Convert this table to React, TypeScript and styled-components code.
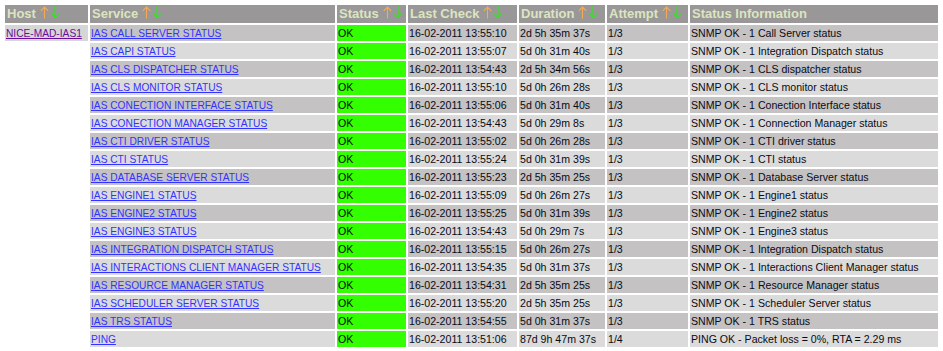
import React from "react";
import styled, { createGlobalStyle } from "styled-components";

interface IService {
  name: string;
  lastCheck: string;
  duration: string;
  attempt: string;
  info: string;
}

const services: IService[] = [
  { name: "IAS CALL SERVER STATUS", lastCheck: "16-02-2011 13:55:10", duration: "2d 5h 35m 37s", attempt: "1/3", info: "SNMP OK - 1 Call Server status" },
  { name: "IAS CAPI STATUS", lastCheck: "16-02-2011 13:55:07", duration: "5d 0h 31m 40s", attempt: "1/3", info: "SNMP OK - 1 Integration Dispatch status" },
  { name: "IAS CLS DISPATCHER STATUS", lastCheck: "16-02-2011 13:54:43", duration: "2d 5h 34m 56s", attempt: "1/3", info: "SNMP OK - 1 CLS dispatcher status" },
  { name: "IAS CLS MONITOR STATUS", lastCheck: "16-02-2011 13:55:10", duration: "5d 0h 26m 28s", attempt: "1/3", info: "SNMP OK - 1 CLS monitor status" },
  { name: "IAS CONECTION INTERFACE STATUS", lastCheck: "16-02-2011 13:55:06", duration: "5d 0h 31m 40s", attempt: "1/3", info: "SNMP OK - 1 Conection Interface status" },
  { name: "IAS CONECTION MANAGER STATUS", lastCheck: "16-02-2011 13:54:43", duration: "5d 0h 29m 8s", attempt: "1/3", info: "SNMP OK - 1 Connection Manager status" },
  { name: "IAS CTI DRIVER STATUS", lastCheck: "16-02-2011 13:55:02", duration: "5d 0h 26m 28s", attempt: "1/3", info: "SNMP OK - 1 CTI driver status" },
  { name: "IAS CTI STATUS", lastCheck: "16-02-2011 13:55:24", duration: "5d 0h 31m 39s", attempt: "1/3", info: "SNMP OK - 1 CTI status" },
  { name: "IAS DATABASE SERVER STATUS", lastCheck: "16-02-2011 13:55:23", duration: "2d 5h 35m 25s", attempt: "1/3", info: "SNMP OK - 1 Database Server status" },
  { name: "IAS ENGINE1 STATUS", lastCheck: "16-02-2011 13:55:09", duration: "5d 0h 26m 27s", attempt: "1/3", info: "SNMP OK - 1 Engine1 status" },
  { name: "IAS ENGINE2 STATUS", lastCheck: "16-02-2011 13:55:25", duration: "5d 0h 31m 39s", attempt: "1/3", info: "SNMP OK - 1 Engine2 status" },
  { name: "IAS ENGINE3 STATUS", lastCheck: "16-02-2011 13:54:43", duration: "5d 0h 29m 7s", attempt: "1/3", info: "SNMP OK - 1 Engine3 status" },
  { name: "IAS INTEGRATION DISPATCH STATUS", lastCheck: "16-02-2011 13:55:15", duration: "5d 0h 26m 27s", attempt: "1/3", info: "SNMP OK - 1 Integration Dispatch status" },
  { name: "IAS INTERACTIONS CLIENT MANAGER STATUS", lastCheck: "16-02-2011 13:54:35", duration: "5d 0h 31m 37s", attempt: "1/3", info: "SNMP OK - 1 Interactions Client Manager status" },
  { name: "IAS RESOURCE MANAGER STATUS", lastCheck: "16-02-2011 13:54:31", duration: "2d 5h 35m 25s", attempt: "1/3", info: "SNMP OK - 1 Resource Manager status" },
  { name: "IAS SCHEDULER SERVER STATUS", lastCheck: "16-02-2011 13:55:20", duration: "2d 5h 35m 25s", attempt: "1/3", info: "SNMP OK - 1 Scheduler Server status" },
  { name: "IAS TRS STATUS", lastCheck: "16-02-2011 13:54:55", duration: "5d 0h 31m 37s", attempt: "1/3", info: "SNMP OK - 1 TRS status" },
  { name: "PING", lastCheck: "16-02-2011 13:51:06", duration: "87d 9h 47m 37s", attempt: "1/4", info: "PING OK - Packet loss = 0%, RTA = 2.29 ms" },
];

const columns = [
  { title: "Host", width: 83, sortable: true },
  { title: "Service", width: 245, sortable: true },
  { title: "Status", width: 69, sortable: true },
  { title: "Last Check", width: 109, sortable: true },
  { title: "Duration", width: 86, sortable: true },
  { title: "Attempt", width: 81, sortable: true },
  { title: "Status Information", width: 248, sortable: false },
];

const SortArrows: React.FC = () => (
  <Arrows width="20" height="13" viewBox="0 0 20 13">
    <g fill="none" strokeWidth="1.1">
      <path d="M4.5 1 V12.5 M0.8 4.8 L4.5 1 L8.2 4.8" stroke="#f7aa55" />
      <path d="M15 0 V11.5 M11.3 7.7 L15 11.5 L18.7 7.7" stroke="#2ee81c" />
    </g>
  </Arrows>
);

export default function App() {
  return (
    <>
      <GlobalStyle />
      <StatusTable>
        <colgroup>
          {columns.map((c) => (
            <Col key={c.title} $width={c.width} />
          ))}
        </colgroup>
        <thead>
          <tr>
            {columns.map((c) => (
              <HeadCell key={c.title}>
                {c.title}
                {c.sortable && <SortArrows />}
              </HeadCell>
            ))}
          </tr>
        </thead>
        <tbody>
          {services.map((s, i) => {
            const odd = i % 2 === 0;
            return (
              <tr key={s.name}>
                {i === 0 ? (
                  <HostCell>
                    <HostLink href="#">NICE-MAD-IAS1</HostLink>
                  </HostCell>
                ) : (
                  <EmptyCell />
                )}
                <Cell $odd={odd}>
                  <ServiceLink href="#">{s.name}</ServiceLink>
                </Cell>
                <OkCell>OK</OkCell>
                <Cell $odd={odd}>{s.lastCheck}</Cell>
                <Cell $odd={odd}>{s.duration}</Cell>
                <Cell $odd={odd}>{s.attempt}</Cell>
                <Cell $odd={odd}>{s.info}</Cell>
              </tr>
            );
          })}
        </tbody>
      </StatusTable>
    </>
  );
}

const GlobalStyle = createGlobalStyle`
  html, body {
    margin: 0;
    padding: 0;
    background: #ffffff;
  }
  body {
    font-family: "Liberation Sans", Arial, sans-serif;
  }
`;

const StatusTable = styled.table`
  margin: 3px 3px 0;
  border-collapse: separate;
  border-spacing: 2px;
  table-layout: fixed;
  font-family: "Liberation Sans", Arial, sans-serif;
`;

const Col = styled.col<{ $width: number }>`
  width: ${(p) => p.$width}px;
`;

const HeadCell = styled.th`
  height: 18px;
  padding: 0 0 0 2px;
  background-color: #999797;
  color: #dce5c1;
  font-size: 13px;
  font-weight: bold;
  text-align: left;
  white-space: nowrap;
  vertical-align: middle;
  line-height: 18px;
`;

const Arrows = styled.svg`
  margin-left: 4px;
  vertical-align: -1px;
`;

const BaseCell = styled.td`
  height: 16px;
  padding: 0 0 0 1px;
  font-size: 10.6px;
  line-height: 14px;
  color: #0a0a14;
  white-space: nowrap;
  overflow: hidden;
  vertical-align: middle;
`;

const Cell = styled(BaseCell)<{ $odd: boolean }>`
  background-color: ${(p) => (p.$odd ? "#c4c2c2" : "#dbdbdb")};
`;

const HostCell = styled(BaseCell)`
  background-color: #d6d6d6;
`;

const EmptyCell = styled(BaseCell)`
  background: transparent;
`;

const OkCell = styled(BaseCell)`
  background-color: #33ff00;
`;

const ServiceLink = styled.a`
  color: #3333ff;
  font-size: 10.2px;
  line-height: 1;
  text-decoration: underline;
`;

const HostLink = styled.a`
  color: #6a0d9c;
  font-size: 10.2px;
  line-height: 1;
  text-decoration: underline;
`;
